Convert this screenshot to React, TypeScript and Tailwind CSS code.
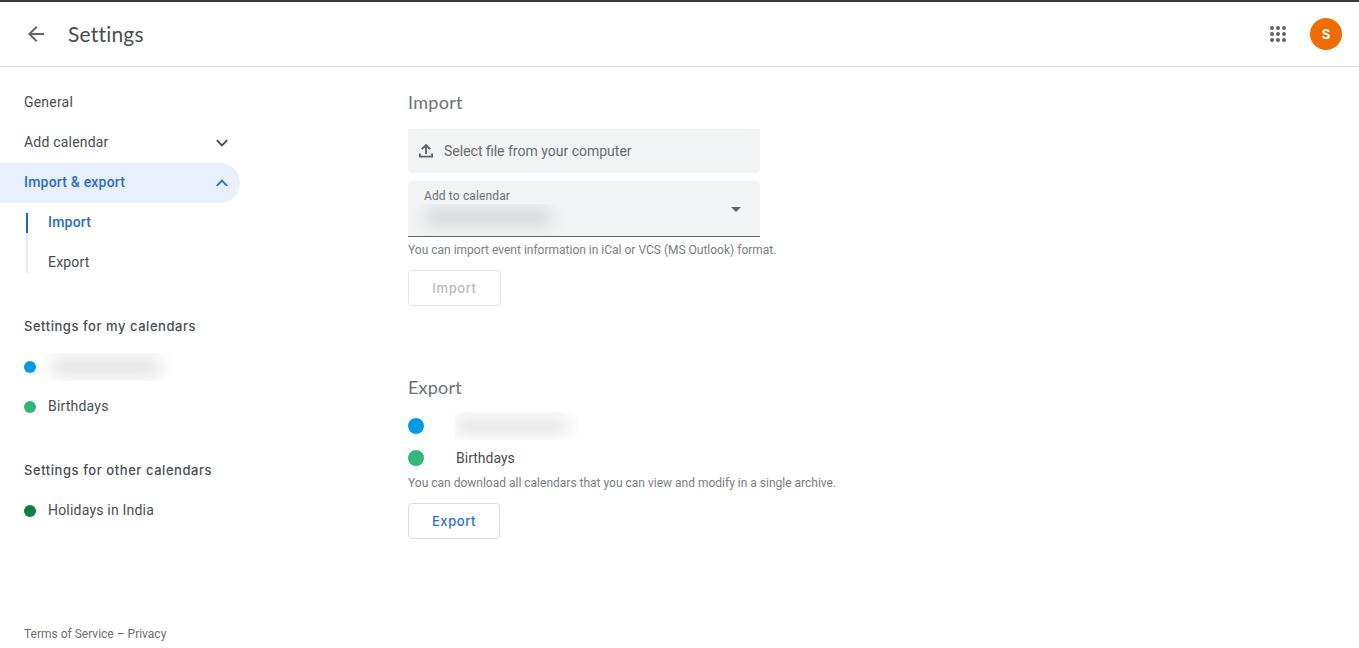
import React from 'react';

interface NavItemProps {
  label: string;
  active?: boolean;
  chevron?: 'up' | 'down';
}

const NavItem: React.FC<NavItemProps> = ({ label, active, chevron }) => (
  <a
    href="#"
    className={`flex h-10 w-60 items-center justify-between rounded-r-full pl-6 pr-3 text-sm leading-5 ${
      active ? 'bg-[#e8f0fe] font-medium text-[#2a6dcb]' : 'text-[#4a4d50]'
    }`}
  >
    <span className="pb-0.5 tracking-[0.2px]">{label}</span>
    {chevron && (
      <svg viewBox="0 0 12 8" className="h-2 w-3" fill="none" stroke="currentColor" strokeWidth="1.9">
        <path d={chevron === 'down' ? 'M0.8 1.2 L6 6.4 L11.2 1.2' : 'M0.8 6.8 L6 1.6 L11.2 6.8'} />
      </svg>
    )}
  </a>
);

interface CalendarRowProps {
  label?: string;
  dot: string;
}

// Sem label, o nome do calendário fica oculto (desfocado)
const CalendarRow: React.FC<CalendarRowProps> = ({ label, dot }) => (
  <div className="flex h-10 items-center pl-6 text-sm text-[#4a4d50]">
    <span className={`h-3 w-3 shrink-0 rounded-full ${dot}`} />
    {label ? (
      <span className="ml-3 pb-0.5 tracking-[0.2px]">{label}</span>
    ) : (
      <span className="ml-1.5 flex h-7 w-[140px] items-center overflow-hidden pl-2">
        <span className="h-4 w-28 rounded-full bg-[#e0e0e0] blur-[8px]" />
      </span>
    )}
  </div>
);

const Header = () => (
  <header className="flex h-[67px] items-center justify-between border-b border-t-2 border-b-[#dadce0] border-t-[#3a393b] pl-6 pr-[17px]">
    <div className="flex items-center">
      <svg viewBox="0 0 24 24" className="h-6 w-6" fill="#5f6368">
        <path d="M20 11H7.83l5.59-5.59L12 4l-8 8 8 8 1.41-1.41L7.83 13H20v-2z" />
      </svg>
      <h1 className="ml-5 font-['Lato',sans-serif] text-[21px] leading-6 tracking-[0.2px] text-[#4a4d50]">Settings</h1>
    </div>
    <div className="flex items-center gap-5">
      <svg viewBox="0 0 24 24" className="h-6 w-6" fill="#5f6368">
        {[6, 12, 18].map(y => [6, 12, 18].map(x => <circle key={`${x}-${y}`} cx={x} cy={y} r="2" />))}
      </svg>
      <div className="flex h-8 w-8 items-center justify-center rounded-full bg-[#ef6c00] pt-px font-['Inter',sans-serif] text-[13px] font-bold text-white">
        S
      </div>
    </div>
  </header>
);

const Sidebar = () => (
  <nav className="flex w-[408px] flex-col pt-4">
    <NavItem label="General" />
    <NavItem label="Add calendar" chevron="down" />
    <NavItem label="Import & export" active chevron="up" />
    <div className="flex h-20 pl-[26px] text-sm">
      <div className="flex w-0.5 flex-col py-2.5">
        <span className="h-5 bg-[#1967d2]" />
        <span className="h-10 bg-[#e8eaed]" />
      </div>
      <div className="ml-5 flex flex-col tracking-[0.2px]">
        <a href="#" className="flex h-10 items-center pb-0.5 font-medium text-[#2a6dcb]">Import</a>
        <a href="#" className="flex h-10 items-center pb-0.5 text-[#4a4d50]">Export</a>
      </div>
    </div>

    <h2 className="mt-6 flex h-10 items-center pl-6 font-['Inter',sans-serif] text-[13px] font-medium tracking-[0.54px] text-[#4a4d50]">
      Settings for my calendars
    </h2>
    <CalendarRow dot="bg-[#039be5]" />
    <CalendarRow dot="bg-[#33b679]" label="Birthdays" />

    <h2 className="mt-6 flex h-10 items-center pl-6 font-['Inter',sans-serif] text-[13px] font-medium tracking-[0.56px] text-[#4a4d50]">
      Settings for other calendars
    </h2>
    <CalendarRow dot="bg-[#0b8043]" label="Holidays in India" />

    <footer className="mt-[95px] pl-6 text-xs leading-4 text-[#6a6e72]">Terms of Service – Privacy</footer>
  </nav>
);

const ImportSection = () => (
  <section className="flex flex-col items-start">
    <h2 className="font-['Lato',sans-serif] text-lg leading-6 tracking-[0.3px] text-[#6e7276]">Import</h2>
    <button className="mt-[15px] flex h-11 w-[352px] items-center rounded bg-[#f1f3f4] pl-[9px] text-sm text-[#686c70]">
      <svg viewBox="0 0 18 18" className="h-[18px] w-[18px]" fill="none" stroke="#5f6368" strokeWidth="1.9">
        <path d="M9 12V4" />
        <path d="M2.9 11.5v3.1h12.2v-3.1" />
        <path d="M4.8 7.2L9 3l4.2 4.2" />
      </svg>
      <span className="ml-[9px]">Select file from your computer</span>
    </button>
    <div className="mt-2 flex h-14 w-[352px] items-center justify-between rounded-t border-b border-[#5f6368] bg-[#f1f3f4] pr-[19px]">
      <div className="flex h-full flex-col">
        <span className="pl-4 pt-[7px] text-xs leading-4 tracking-[0.13px] text-[#6e7276]">Add to calendar</span>
        <span className="-ml-[3px] flex h-8 w-[173px] items-center overflow-hidden pb-1.5 pl-[19px]">
          <span className="h-4 w-32 rounded-full bg-[#d4d6d7] blur-[8px]" />
        </span>
      </div>
      <svg viewBox="0 0 10 5" className="mt-0.5 h-[5px] w-2.5" fill="#5f6368">
        <path d="M0 0h10L5 5z" />
      </svg>
    </div>
    <p className="mt-[5px] text-xs leading-4 text-[#7a7e82]">
      You can import event information in iCal or VCS (MS Outlook) format.
    </p>
    <button
      disabled
      className="mt-3 h-9 w-[93px] rounded border border-[#e4e5e7] pt-0.5 font-['Inter',sans-serif] text-[13px] font-medium tracking-[0.6px] text-[#b9bbbd]"
    >
      Import
    </button>
  </section>
);

const ExportSection = () => (
  <section className="mt-[69px] flex flex-col items-start">
    <h2 className="font-['Lato',sans-serif] text-lg leading-6 tracking-[0.2px] text-[#6e7276]">Export</h2>
    <div className="mt-[11px] flex h-8 items-center">
      <span className="h-4 w-4 rounded-full bg-[#039be5]" />
      <span className="ml-[31px] flex h-7 w-[124px] items-center overflow-hidden">
        <span className="h-4 w-28 bg-[#e3e3e3] blur-[8px]" />
      </span>
    </div>
    <div className="flex h-8 items-center text-sm text-[#4a4d50]">
      <span className="h-4 w-4 rounded-full bg-[#33b679]" />
      <span className="ml-8">Birthdays</span>
    </div>
    <p className="mt-px text-xs leading-4 text-[#7a7e82]">
      You can download all calendars that you can view and modify in a single archive.
    </p>
    <button className="mt-3 h-9 w-[92px] rounded border border-[#dadce0] pt-0.5 font-['Inter',sans-serif] text-[13px] font-medium tracking-[0.6px] text-[#2c70d9]">
      Export
    </button>
  </section>
);

const App: React.FC = () => (
  <div className="h-[648px] overflow-hidden bg-white font-['Roboto',sans-serif]">
    <Header />
    <div className="flex">
      <Sidebar />
      <main className="pt-[23px]">
        <ImportSection />
        <ExportSection />
      </main>
    </div>
  </div>
);

export default App;
